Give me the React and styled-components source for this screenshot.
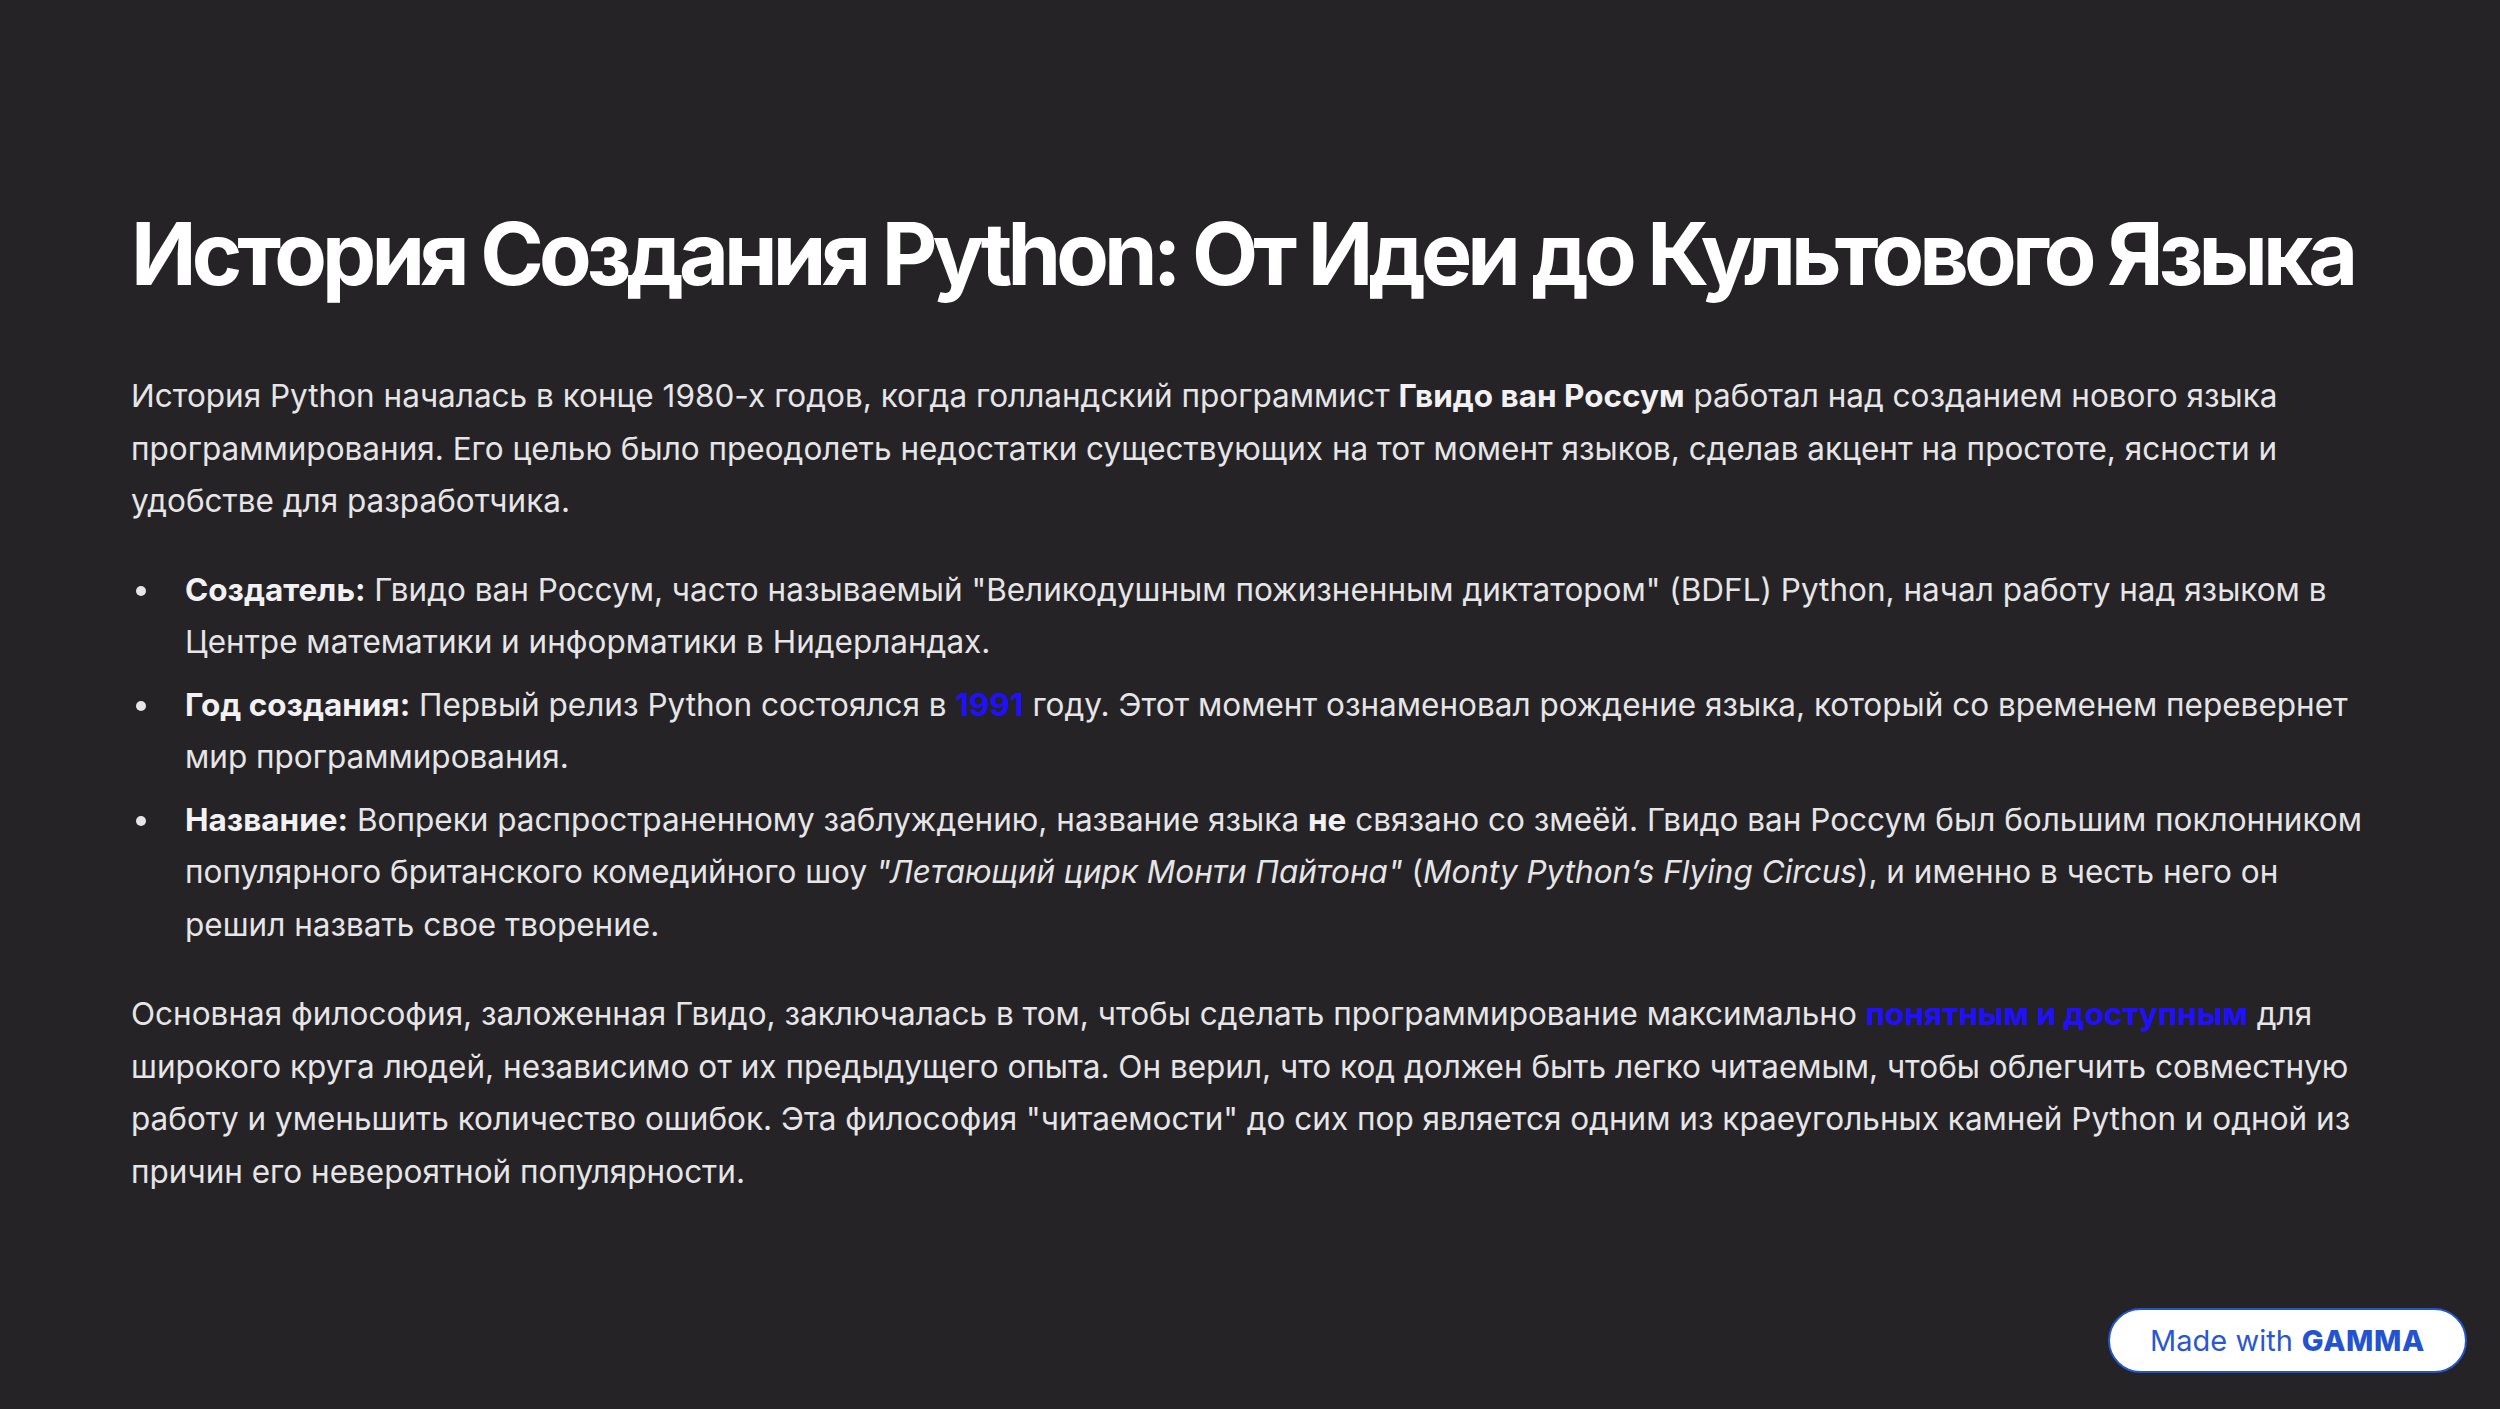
import React from "react";
import styled, { createGlobalStyle } from "styled-components";

const GlobalStyle = createGlobalStyle`
  html, body {
    margin: 0;
    padding: 0;
    background: #252325;
  }
  body {
    font-family: Inter, "Noto Sans", "Liberation Sans", sans-serif;
    -webkit-font-smoothing: antialiased;
  }
`;

const Slide = styled.div`
  box-sizing: border-box;
  width: 100vw;
  min-height: 100vh;
  padding: 203px 131px 80px;
  background: #252325;
  color: #e6e5e7;
`;

const Title = styled.h1`
  margin: 0 0 64px;
  font-size: 86px;
  line-height: 1.2;
  font-weight: 700;
  letter-spacing: -0.057em;
  color: #ffffff;
`;

const Paragraph = styled.p`
  margin: 0 0 ${(p) => p.$gap || 0}px;
  font-size: 31.5px;
  line-height: 52.5px;
  font-weight: 400;
`;

const List = styled.ul`
  margin: 0 0 37px;
  padding: 0;
  list-style: none;
  display: flex;
  flex-direction: column;
  gap: 10px;
`;

const Item = styled.li`
  position: relative;
  padding-left: 54px;
  font-size: 31.5px;
  line-height: 52.5px;

  &::before {
    content: "";
    position: absolute;
    left: 5px;
    top: 22px;
    width: 10px;
    height: 10px;
    border-radius: 50%;
    background: #e6e5e7;
  }
`;

const Strong = styled.strong`
  font-weight: 700;
  color: #f2f1f3;
`;

const Accent = styled.strong`
  font-weight: 700;
  color: #2010ff;
`;

const Badge = styled.a`
  position: fixed;
  right: 33px;
  bottom: 36px;
  box-sizing: border-box;
  width: 359px;
  height: 65px;
  display: flex;
  align-items: center;
  justify-content: center;
  gap: 9px;
  background: #ffffff;
  border: 2px solid #2355cc;
  border-radius: 33px;
  color: #2a58cf;
  text-decoration: none;
  font-size: 29px;
  font-weight: 400;
`;

const Logo = styled.span`
  font-weight: 800;
  letter-spacing: 0.02em;
  color: #2453d0;
`;

export default function App() {
  return (
    <>
      <GlobalStyle />
      <Slide>
        <Title>История Создания Python: От Идеи до Культового Языка</Title>
        <Paragraph $gap={36}>
          История Python началась в конце 1980-х годов, когда голландский
          программист <Strong>Гвидо ван Россум</Strong> работал над созданием
          нового языка программирования. Его целью было преодолеть недостатки
          существующих на тот момент языков, сделав акцент на простоте,
          ясности и удобстве для разработчика.
        </Paragraph>
        <List>
          <Item>
            <Strong>Создатель:</Strong> Гвидо ван Россум, часто называемый
            "Великодушным пожизненным диктатором" (BDFL) Python, начал работу
            над языком в Центре математики и информатики в Нидерландах.
          </Item>
          <Item>
            <Strong>Год создания:</Strong> Первый релиз Python состоялся в{" "}
            <Accent>1991</Accent> году. Этот момент ознаменовал рождение
            языка, который со временем перевернет мир программирования.
          </Item>
          <Item>
            <Strong>Название:</Strong> Вопреки распространенному заблуждению,
            название языка <Strong>не</Strong> связано со змеёй. Гвидо ван
            Россум был большим поклонником популярного британского
            комедийного шоу <em>"Летающий цирк Монти Пайтона"</em> (
            <em>Monty Python’s Flying Circus</em>), и именно в честь него он
            решил назвать свое творение.
          </Item>
        </List>
        <Paragraph>
          Основная философия, заложенная Гвидо, заключалась в том, чтобы
          сделать программирование максимально{" "}
          <Accent>понятным и доступным</Accent> для широкого круга людей,
          независимо от их предыдущего опыта. Он верил, что код должен быть
          легко читаемым, чтобы облегчить совместную работу и уменьшить
          количество ошибок. Эта философия "читаемости" до сих пор является
          одним из краеугольных камней Python и одной из причин его
          невероятной популярности.
        </Paragraph>
      </Slide>
      <Badge href="#">
        <span>Made with</span>
        <Logo>GAMMA</Logo>
      </Badge>
    </>
  );
}
